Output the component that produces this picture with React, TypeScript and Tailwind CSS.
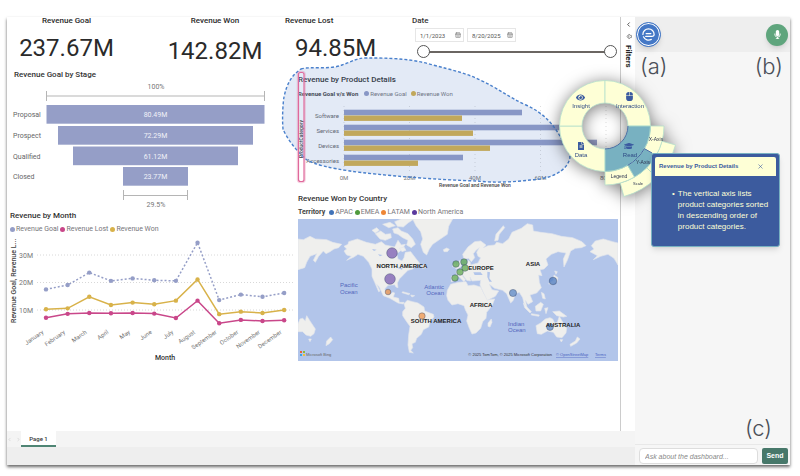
import { useState } from "react";
import { CalendarDays, ChevronLeft, ChevronRight, Volume1, X } from "lucide-react";
import { FaEye, FaFileAlt, FaGraduationCap, FaMicrophone, FaMouse } from "react-icons/fa";

const GOAL = "#959ec7";
const WON = "#d8b24a";
const LOST = "#c9478a";

const funnel = [
    { stage: "Proposal", value: "80.49M", x: 39.5, y: 25, w: 218 },
    { stage: "Prospect", value: "72.29M", x: 51, y: 46, w: 195 },
    { stage: "Qualified", value: "61.12M", x: 66, y: 66.5, w: 165 },
    { stage: "Closed", value: "23.77M", x: 116, y: 87, w: 65 },
];

const products = [
    { name: "Software", goal: 178, won: 118 },
    { name: "Services", goal: 232, won: 129 },
    { name: "Devices", goal: 253, won: 146 },
    { name: "Accessories", goal: 119, won: 74 },
];

const months = [
    "January", "February", "March", "April", "May", "June",
    "July", "August", "September", "October", "November", "December",
];

const goalSeries = [17.5, 19.1, 23.6, 20.6, 21.5, 20.8, 20.6, 34.5, 13.6, 15.6, 14.8, 16.2];
const wonSeries = [10.3, 10.6, 14.8, 11.8, 12.7, 12.1, 13.4, 21.1, 8.5, 9.4, 8.9, 10];
const lostSeries = [7.2, 8.6, 8.9, 8.8, 8.9, 8.7, 7.1, 13.4, 5.2, 6.4, 6, 6.3];

const monthX = (i: number) => 39 + i * 21.65;
const millionY = (v: number) => 103.5 - v * 2.75;

interface LegendItem {
    label: string;
    color: string;
}

function Legend({ title, items, small }: { title?: string; items: LegendItem[]; small?: boolean }) {
    return (
        <ul
            className={`mt-1 flex items-center leading-[9px] text-[#77767a] ${small ? "gap-1 text-[6px]" : "gap-[2px] text-[7px]"
                }`}
        >
            {title && <li className="mr-[2px] font-bold text-[#444]">{title}</li>}
            {items.map((item) => (
                <li key={item.label} className="flex items-center gap-px whitespace-nowrap">
                    <svg viewBox="0 0 6 6" className="size-[5px]">
                        <circle cx="3" cy="3" r="3" fill={item.color} />
                    </svg>
                    {item.label}
                </li>
            ))}
        </ul>
    );
}

function FunnelChart() {
    return (
        <svg viewBox="0 0 291 131" className="block w-full" fontSize="7">
            <g stroke="#b5b5b5" fill="none">
                <path d="M39.5 16H257.5M39.5 11V21M257.5 11V21" />
                <path d="M116.5 115.5H180.5M116.5 110V120M180.5 110V120" />
            </g>
            <text x="149" y="9" textAnchor="middle" fill="#777">100%</text>
            {funnel.map((f) => (
                <g key={f.stage}>
                    <rect x={f.x} y={f.y} width={f.w} height="18.7" fill={GOAL} />
                    <text x="6" y={f.y + 12} fill="#666">{f.stage}</text>
                    <text x="148.5" y={f.y + 12} textAnchor="middle" fill="#f1f2f8">{f.value}</text>
                </g>
            ))}
            <text x="149" y="127" textAnchor="middle" fill="#777">29.5%</text>
        </svg>
    );
}

function Series({ data, color, dashed }: { data: number[]; color: string; dashed?: boolean }) {
    return (
        <g>
            <polyline
                points={data.map((v, i) => `${monthX(i)},${millionY(v)}`).join(" ")}
                fill="none"
                stroke={color}
                strokeWidth="1.5"
                strokeDasharray={dashed ? "2 2" : undefined}
            />
            {data.map((v, i) => (
                <circle key={i} cx={monthX(i)} cy={millionY(v)} r="2.2" fill={color} />
            ))}
        </g>
    );
}

function MonthChart() {
    return (
        <svg viewBox="0 0 291 130" className="block w-full overflow-visible" fontSize="7">
            {[30, 20, 10].map((v) => (
                <g key={v}>
                    <path d={`M30 ${millionY(v)}H286`} stroke="#d8d8d8" strokeDasharray="1 2" />
                    <text x="26" y={millionY(v) + 2.5} textAnchor="end" fill="#777">{v}M</text>
                </g>
            ))}
            <text transform="translate(9 89) rotate(-90)" fontWeight="500" fill="#444">
                Revenue Goal, Revenue L...
            </text>
            <Series data={goalSeries} color={GOAL} dashed />
            <Series data={lostSeries} color={LOST} />
            <Series data={wonSeries} color={WON} />
            {months.map((m, i) => (
                <text
                    key={m}
                    transform={`translate(${monthX(i) - 2} 99) rotate(-35)`}
                    textAnchor="end"
                    fontSize="6"
                    fill="#777"
                >
                    {m}
                </text>
            ))}
            <text x="158" y="126" textAnchor="middle" fontWeight="500" fill="#333">Month</text>
        </svg>
    );
}

function ProductChart() {
    return (
        <svg viewBox="0 0 320 92" className="block w-full overflow-visible" fontSize="6">
            <path d="M46 8V76M111.5 8V76M177 8V76M242.5 8V76M308 8V76" stroke="#ddd" strokeDasharray="1 3" />
            {products.map((p, i) => (
                <g key={p.name}>
                    <rect x="46" y={11.7 + i * 15} width={p.goal} height="5.6" fill={GOAL} />
                    <rect x="46" y={17.5 + i * 15} width={p.won} height="5.4" fill={WON} />
                    <text x="41" y={20 + i * 15} textAnchor="end" fill="#666">{p.name}</text>
                </g>
            ))}
            {["0M", "20M", "40M", "60M", "80M"].map((t, i) => (
                <text key={t} x={46 + i * 65.5} y="82" textAnchor="middle" fill="#777">{t}</text>
            ))}
            <text x="177" y="89" textAnchor="middle" fontSize="5" fontWeight="500" fill="#444">
                Revenue Goal and Revenue Won
            </text>
            <text transform="translate(5 60) rotate(-90)" fontSize="5" fontWeight="500" fill="#222">
                ProductCategory
            </text>
        </svg>
    );
}

const land = [
    // eastern Siberia, wrapped round the left edge
    "M0 60 L16 62 L36 52 L52 60 L86 62 L104 70 L131 76 L122 86 L108 90 L96 98 L84 104 L76 96 L62 112 L52 130 L46 124 L56 104 L36 112 L26 130 L20 146 L0 152Z",
    // North and Central America
    "M138 96 L146 90 L138 82 L150 76 L152 68 L178 60 L205 70 L232 76 L250 68 L262 78 L290 84 L300 64 L310 78 L322 76 L312 92 L296 104 L300 120 L312 126 L318 116 L322 100 L338 98 L350 114 L366 134 L352 142 L344 150 L330 154 L318 166 L304 180 L298 192 L300 206 L294 204 L290 197 L270 199 L260 210 L266 226 L276 228 L284 220 L290 222 L286 234 L302 238 L304 250 L318 250 L316 255 L300 252 L276 238 L256 230 L244 204 L236 196 L246 216 L242 218 L230 190 L222 172 L222 150 L212 130 L196 112 L180 106 L168 114 L146 124 L160 112 L146 108Z",
    // South America
    "M318 254 L328 244 L344 248 L360 252 L378 264 L380 276 L406 286 L408 294 L396 308 L392 324 L376 332 L370 346 L356 358 L352 370 L342 374 L344 386 L338 394 L346 402 L334 400 L330 378 L332 348 L336 322 L326 308 L314 290 L314 278 L322 268Z",
    // Greenland and the Arctic islands
    "M344 0 L464 0 L452 22 L448 46 L424 62 L404 76 L394 90 L386 108 L376 100 L368 76 L374 60 L368 38 L354 20Z",
    "M232 44 L248 36 L262 46 L278 44 L280 56 L262 64 L246 60Z",
    "M222 34 L236 26 L244 34 L232 42Z",
    "M284 30 L300 26 L310 36 L330 44 L344 60 L352 76 L340 86 L326 78 L330 64 L314 56 L300 46 L288 42Z",
    "M254 16 L276 10 L292 20 L272 26Z",
    "M290 8 L310 0 L348 0 L330 12 L316 24 L298 22Z",
    "M304 88 L318 84 L324 94 L312 98Z",
    "M436 92 L446 87 L454 91 L448 98 L438 98Z",
    "M314 218 L336 224 L332 227 L312 221Z M338 228 L350 230 L342 234Z M370 140 L382 136 L384 146 L374 148Z",
    // Africa and Madagascar
    "M458 196 L482 190 L504 188 L510 200 L528 198 L548 204 L558 224 L570 242 L590 240 L582 260 L566 280 L564 298 L554 308 L548 328 L534 342 L522 345 L514 328 L506 306 L510 288 L502 272 L498 260 L480 254 L462 258 L450 244 L446 230 L448 214Z",
    "M570 312 L580 300 L582 310 L576 324 L570 322Z",
    // Eurasia
    "M460 188 L460 172 L478 170 L474 158 L490 150 L500 138 L508 136 L510 124 L516 128 L518 138 L540 132 L548 116 L540 112 L536 100 L544 86 L534 94 L526 104 L530 116 L520 128 L512 118 L498 120 L494 106 L510 84 L530 68 L548 66 L564 78 L556 86 L570 80 L590 78 L596 70 L614 74 L632 60 L642 40 L670 28 L688 14 L704 18 L706 36 L728 40 L762 44 L790 52 L824 56 L852 68 L864 80 L850 86 L832 88 L818 96 L808 124 L798 144 L796 120 L804 102 L780 98 L760 106 L744 120 L750 138 L738 150 L726 152 L732 170 L722 168 L724 190 L730 206 L716 222 L696 228 L704 248 L690 256 L682 244 L688 270 L680 260 L674 236 L664 220 L652 224 L646 244 L638 252 L626 224 L614 214 L590 208 L574 196 L582 212 L602 216 L592 232 L568 244 L554 216 L546 198 L548 184 L522 186 L516 174 L518 186 L506 184 L496 170 L490 166 L502 182 L498 188 L482 172 L474 182Z",
    "M478 134 L486 124 L490 142 L478 150 L472 148Z M466 136 L474 134 L472 144 L464 144Z",
    "M590 66 L594 46 L616 20 L620 26 L604 46 L600 64Z",
    // Japan
    "M768 168 L780 176 L776 190 L760 196 L752 194 L766 184Z M770 156 L778 158 L774 166Z",
    // South-east Asia, Australia and New Zealand
    "M676 252 L700 278 L696 282 L680 266Z M700 284 L724 288 L722 292 L700 288Z",
    "M712 262 L728 250 L736 256 L728 276 L714 276Z M740 268 L750 266 L744 284Z M730 220 L738 224 L742 240 L734 238Z",
    "M764 278 L784 276 L806 292 L796 294 L776 290Z",
    "M714 320 L728 312 L742 300 L756 296 L764 300 L770 312 L778 310 L784 292 L792 306 L806 328 L804 342 L792 356 L776 354 L766 340 L748 336 L730 346 L718 344Z M786 362 L794 362 L790 369Z",
    "M838 354 L846 360 L836 372 L818 382 L816 376 L832 366Z",
    "M0 314 L6 300 L14 298 L22 306 L26 290 L36 306 L52 330 L48 344 L38 352 L24 348 L14 338 L0 338Z M32 360 L40 360 L36 368Z M86 366 L98 354 L104 362 L94 374 L84 380Z",
    // Alaska again on the right edge
    "M876 98 L888 90 L880 80 L892 66 L916 60 L944 68 L960 72 L960 138 L948 118 L930 106 L908 112 L886 122 L898 110Z",
];

const pins = [
    { x: 94, y: 34, r: 5.3, color: "#7a5bb0" },
    { x: 92, y: 60, r: 5.3, color: "#7a5bb0" },
    { x: 90, y: 73, r: 2.8, color: "#f0964a" },
    { x: 124, y: 97, r: 3.2, color: "#f0964a" },
    { x: 158, y: 45, r: 3.3, color: "#5fa84f" },
    { x: 166, y: 43, r: 3.3, color: "#5fa84f" },
    { x: 167, y: 49, r: 3.3, color: "#5fa84f" },
    { x: 162, y: 53, r: 3.3, color: "#5fa84f" },
    { x: 157, y: 59, r: 3.3, color: "#5fa84f" },
    { x: 215, y: 74, r: 3.6, color: "#5a85c4" },
    { x: 255, y: 62, r: 3.8, color: "#4a78be" },
    { x: 252, y: 108, r: 3.4, color: "#5a85c4" },
];

function WorldMap() {
    return (
        <svg viewBox="0 0 320 142" className="mt-[2px] block w-full bg-[#b2c5ea] font-['Liberation_Sans',sans-serif]">
            <g transform="scale(0.33333)" fill="#efefed" stroke="#e3e6ec" strokeWidth="2" strokeLinejoin="round">
                {land.map((d) => (
                    <path key={d} d={d} />
                ))}
                {/* inland waters */}
                <g fill="#b2c5ea" stroke="none">
                    <path d="M568 158 L576 160 L574 178 L582 188 L574 188 L568 174Z" />
                    <path d="M526 160 L548 160 L554 168 L530 168Z" />
                    <path d="M302 144 L314 148 L312 152 L300 148Z M222 90 L236 92 L228 96Z M240 106 L254 108 L246 112Z" />
                </g>
            </g>
            {pins.map((p) => (
                <circle
                    key={`${p.x}-${p.y}`}
                    cx={p.x}
                    cy={p.y}
                    r={p.r}
                    fill={p.color}
                    fillOpacity="0.75"
                    stroke="#3d4a6b"
                    strokeOpacity="0.6"
                    strokeWidth="0.7"
                />
            ))}
            <g fontSize="6" fontWeight="bold" fill="#222" textAnchor="middle">
                <text x="104" y="49">NORTH AMERICA</text>
                <text x="138" y="104">SOUTH AMERICA</text>
                <text x="183" y="51">EUROPE</text>
                <text x="235" y="47">ASIA</text>
                <text x="183" y="88">AFRICA</text>
                <text x="265" y="108">AUSTRALIA</text>
            </g>
            <g fontSize="6" fill="#5267bd">
                <text x="42" y="68">Pacific</text>
                <text x="42" y="75">Ocean</text>
                <text x="146" y="70" textAnchor="end">Atlantic</text>
                <text x="146" y="76" textAnchor="end">Ocean</text>
                <text x="210" y="107">Indian</text>
                <text x="210" y="113">Ocean</text>
            </g>
            <path d="M2 132h2v2h-2z" fill="#e8623a" />
            <path d="M5 132h2v2h-2z" fill="#8bb93c" />
            <path d="M2 135h2v2h-2z" fill="#3fa3e0" />
            <path d="M5 135h2v2h-2z" fill="#f3bb3a" />
            <g fontSize="4">
                <text x="8" y="137" fill="#666">Microsoft Bing</text>
                <text x="254" y="137" textAnchor="end" fill="#333">
                    © 2025 TomTom, © 2025 Microsoft Corporation
                </text>
                <a href="#osm">
                    <text x="258" y="137" fill="#4a5fc0" textDecoration="underline">© OpenStreetMap</text>
                </a>
                <a href="#terms">
                    <text x="297" y="137" fill="#4a5fc0" textDecoration="underline">Terms</text>
                </a>
            </g>
        </svg>
    );
}

// ring sector around 0,0; angles in degrees, clockwise from the x axis
function sector(r0: number, r1: number, from: number, to: number) {
    const point = (r: number, deg: number) => {
        const a = (deg * Math.PI) / 180;
        return `${(r * Math.cos(a)).toFixed(2)} ${(r * Math.sin(a)).toFixed(2)}`;
    };
    return `M${point(r0, from)} L${point(r1, from)} A${r1} ${r1} 0 0 1 ${point(r1, to)} L${point(r0, to)} A${r0} ${r0} 0 0 0 ${point(r0, from)}Z`;
}

function HelpWheel() {
    return (
        <svg
            viewBox="-75 -75 150 150"
            className="absolute top-[34px] right-[110px] w-[150px] font-['Liberation_Sans',sans-serif] drop-shadow-[0_2px_8px_rgba(0,0,0,0.5)]"
        >
            <g fill="#feffd6" stroke="#b5dfcb" strokeWidth="0.8">
                <path d={sector(59, 73, 15, 45)} />
                <path d={sector(59, 73, 45, 75)} />
                <path d={sector(45.5, 59, 0, 30)} />
                <path d={sector(45.5, 59, 60, 90)} />
                <path d={sector(45.5, 59, 30, 60)} fill="#78b1c1" />
                <path d={sector(23, 45.5, 90, 180)} />
                <path d={sector(23, 45.5, 180, 270)} />
                <path d={sector(23, 45.5, 270, 360)} />
                <path d={sector(23, 45.5, 0, 90)} fill="#78b1c1" />
            </g>
            <path
                d="M23 0 A23 23 0 0 1 0 23M39.4 22.7 A45.5 45.5 0 0 1 22.7 39.4M39.4 22.7 L47 27"
                fill="none"
                stroke="#3b5ba0"
                strokeWidth="0.9"
            />
            <g fill="#3b5ba0" color="#3b5ba0">
                <FaEye x="-29" y="-33" size={9} />
                <FaMouse x="20" y="-34" size={9} />
                <FaFileAlt x="-28" y="16" size={8} />
                <FaGraduationCap x="19" y="15" size={10} />
            </g>
            <g fontSize="6" textAnchor="middle" fill="#2f4a85">
                <text x="-24" y="-18">Insight</text>
                <text x="25" y="-18">Interaction</text>
                <text x="-24" y="31">Data</text>
                <text x="25" y="31">Read</text>
            </g>
            <g fontSize="5" textAnchor="middle" fill="#2b3350">
                <text x="51" y="15">X-Axis</text>
                <text x="38" y="38">Y-Axis</text>
                <text x="14" y="52">Legend</text>
                <text x="33" y="59" fontSize="4">Scale</text>
            </g>
        </svg>
    );
}

function ExplainPopup({ onClose }: { onClose: () => void }) {
    return (
        <section className="absolute top-[136px] right-[10px] h-[94px] w-[129px] rounded-[3px] border border-[#78b1c1] bg-[#3c5b9e] p-[3px] font-['Liberation_Sans',sans-serif] shadow-md">
            <header className="flex h-[19px] items-center justify-between rounded-t-[2px] bg-[#feffd6] pr-3 pl-1 text-[#3b5ba0]">
                <h3 className="text-[6px] font-bold whitespace-nowrap">Revenue by Product Details</h3>
                <button aria-label="Close" onClick={onClose}>
                    <X size={7} />
                </button>
            </header>
            <ul className="mt-[12px] pl-[17px] text-[8px] leading-[11px] whitespace-nowrap text-[#feffd6]">
                <li className="flex gap-[3px]">
                    <span aria-hidden="true">•</span>
                    <span>
                        The vertical axis lists
                        <br />
                        product categories sorted
                        <br />
                        in descending order of
                        <br />
                        product categories.
                    </span>
                </li>
            </ul>
        </section>
    );
}

function DateBox({ label, value }: { label: string; value: string }) {
    return (
        <div className="flex h-[14px] w-[49px] items-center border border-[#e6e6e6] pr-[2px] pl-1">
            <input aria-label={label} defaultValue={value} className="w-full min-w-0 text-[6px] text-[#555] outline-none" />
            <CalendarDays size={6} className="shrink-0 text-[#666]" />
        </div>
    );
}

const rangeClass =
    "pointer-events-none absolute inset-0 h-[13px] w-full appearance-none bg-transparent [&::-webkit-slider-thumb]:pointer-events-auto [&::-webkit-slider-thumb]:size-[13px] [&::-webkit-slider-thumb]:appearance-none [&::-webkit-slider-thumb]:rounded-full [&::-webkit-slider-thumb]:border [&::-webkit-slider-thumb]:border-[#555] [&::-webkit-slider-thumb]:bg-white";

function DateSlicer() {
    return (
        <div className="flex-1 pr-[3px]">
            <h2 className="text-[8px] leading-[8px] font-medium text-[#333]">Date</h2>
            <div className="mt-[3px] ml-[3px] flex gap-[3px]">
                <DateBox label="Start date" value="1/1/2023" />
                <DateBox label="End date" value="8/20/2025" />
            </div>
            <div className="relative mt-[3px] ml-[5px] flex h-[13px] items-center">
                <div className="mx-[6px] h-[2px] flex-1 bg-[#6b6662]" />
                <input type="range" aria-label="From" defaultValue={0} className={rangeClass} />
                <input type="range" aria-label="To" defaultValue={100} className={rangeClass} />
            </div>
        </div>
    );
}

function Report() {
    return (
        <div className="min-w-0 flex-1 border-r border-[#ccc] bg-white pb-[67px]">
            <div className="flex h-[53px] text-[#2a2a2a]">
                <div className="flex w-[119px] flex-col items-center">
                    <h2 className="text-[8px] leading-[8px] font-medium">Revenue Goal</h2>
                    <p className="mt-[11px] text-[24px] leading-[24px]">237.67M</p>
                </div>
                <div className="ml-[24px] flex w-[130px] flex-col items-center">
                    <h2 className="text-[8px] leading-[8px] font-medium">Revenue Won</h2>
                    <p className="mt-[14px] text-[24px] leading-[24px]">142.82M</p>
                </div>
                <div className="ml-[5px] w-[127px]">
                    <h2 className="text-[8px] leading-[8px] font-medium">Revenue Lost</h2>
                    <p className="mt-[11px] pl-[10px] text-[24px] leading-[24px]">94.85M</p>
                </div>
                <DateSlicer />
            </div>

            <div className="grid grid-cols-[291fr_322fr]">
                <div>
                    <h2 className="pl-[7px] text-[8px] leading-[10px] font-medium text-[#333]">Revenue Goal by Stage</h2>
                    <FunnelChart />
                    <div className="pl-[3px]">
                        <h2 className="text-[8px] leading-[10px] font-medium text-[#333]">Revenue by Month</h2>
                        <Legend
                            items={[
                                { label: "Revenue Goal", color: GOAL },
                                { label: "Revenue Lost", color: LOST },
                                { label: "Revenue Won", color: WON },
                            ]}
                        />
                    </div>
                    <MonthChart />
                </div>

                <div className="pt-[5px] pr-[2px]">
                    <div className="relative">
                        <h2 className="text-[8px] leading-[10px] font-medium text-[#333]">Revenue by Product Details</h2>
                        <Legend
                            small
                            title="Revenue Goal v/s Won"
                            items={[
                                { label: "Revenue Goal", color: GOAL },
                                { label: "Revenue Won", color: WON },
                            ]}
                        />
                        <ProductChart />
                        {/* Lasso selection with the highlighted axis */}
                        <svg viewBox="0 0 300 135" className="pointer-events-none absolute -top-5 -left-5 w-[300px]">
                            <path
                                d="M23 14 C32 11 52 15 64 10 C76 6 78 3 88 3 C108 3 132 3 155 10 C174 15 188 18 202 25 C220 33 230 42 248 50 C266 58 276 70 283 83 C289 92 294 100 291 106 C287 116 274 124 252 125 C236 127 215 128 200 126 C160 125 100 120 72 116 C52 113 38 110 29 105 C18 96 8 82 5 74 C4 62 5 48 6 42 C9 28 14 20 23 14Z"
                                fill="#4472c4"
                                fillOpacity="0.15"
                                stroke="#4a80cc"
                                strokeWidth="1.4"
                                strokeDasharray="3 2"
                            />
                            <rect
                                x="20.5"
                                y="17.5"
                                width="5.5"
                                height="109"
                                rx="2"
                                fill="#fff"
                                fillOpacity="0.1"
                                stroke="#e0699c"
                                strokeWidth="1.2"
                            />
                            <rect
                                x="19.5"
                                y="16.5"
                                width="7.5"
                                height="111"
                                rx="3"
                                fill="none"
                                stroke="#e0699c"
                                strokeOpacity="0.3"
                                strokeWidth="1.5"
                            />
                        </svg>
                    </div>
                    <h2 className="mt-1 text-[8px] leading-[10px] font-medium text-[#333]">Revenue Won by Country</h2>
                    <Legend
                        title="Territory"
                        items={[
                            { label: "APAC", color: "#4173b8" },
                            { label: "EMEA", color: "#4f9a3d" },
                            { label: "LATAM", color: "#ee8636" },
                            { label: "North America", color: "#5b3a9e" },
                        ]}
                    />
                    <WorldMap />
                </div>
            </div>
        </div>
    );
}

function AssistantPanel() {
    return (
        <aside className="flex w-[155px] shrink-0 flex-col bg-[#f6f6f6]">
            <div className="flex h-[35px] items-center justify-between bg-[#eee] pr-[2px] pl-px">
                <button
                    aria-label="Assistant"
                    className="flex size-[25px] items-center justify-center rounded-full border border-[#4478c6] bg-[#4478c6] shadow-md ring-1 ring-white ring-inset"
                >
                    <svg viewBox="0 0 16 16" className="size-[15px]" fill="none" stroke="#fff" strokeWidth="1.3" strokeLinecap="round">
                        <path d="M2 8 A6 6 0 1 1 14 8 C14 9.8 12.5 10 11.5 10 H5" />
                        <path d="M5.5 7 H10.5" />
                        <path d="M2.6 10.5 A6 6 0 0 0 11 13.2" />
                    </svg>
                </button>
                <button
                    aria-label="Speak"
                    className="flex size-[22px] items-center justify-center rounded-full bg-[#5fa57d] text-white shadow-md"
                >
                    <FaMicrophone size={9} />
                </button>
            </div>
            <div className="flex justify-between pr-[7px] pl-[5px] font-['Inter',sans-serif] text-[22px] leading-[28px] font-light text-[#4a4f58]">
                <span>(a)</span>
                <span>(b)</span>
            </div>
            <div className="mt-auto pr-[18px] pb-[2px] text-right font-['Inter',sans-serif] text-[22px] leading-[28px] font-light text-[#4a4f58]">
                (c)
            </div>
            <form
                className="flex h-[21px] items-center gap-1 border-t border-[#e8e8e8] pt-[2px] pr-[2px] pl-1 font-['Liberation_Sans',sans-serif]"
                onSubmit={(e) => e.preventDefault()}
            >
                <input
                    aria-label="Question"
                    placeholder="Ask about the dashboard..."
                    className="h-[16px] w-full min-w-0 rounded-[4px] border border-[#ddd] bg-white px-[5px] text-[7px] outline-none placeholder:text-[#888] placeholder:italic"
                />
                <button className="h-[16px] w-[26px] shrink-0 rounded-[2px] bg-[#47786a] text-[7px] leading-[16px] font-bold text-white">
                    Send
                </button>
            </form>
        </aside>
    );
}

export default function App() {
    const [popupOpen, setPopupOpen] = useState(true);

    return (
        <main className="bg-white pt-[17px] pr-[10px] pb-[11px] pl-[7px] font-['Roboto','Liberation_Sans',sans-serif]">
            <div className="relative flex shadow-[0_2px_3px_rgba(0,0,0,0.6)]">
                <div className="flex min-w-0 flex-1 flex-col">
                    <div className="flex">
                        <Report />
                        <div className="flex w-[14px] flex-col items-center bg-white pt-1 text-[#444]">
                            <button aria-label="Expand filters">
                                <ChevronLeft size={7} strokeWidth={3} />
                            </button>
                            <Volume1 size={7} className="mt-[5px] rotate-180" />
                            <span className="mt-[5px] text-[8px] leading-[10px] font-bold text-[#222] [writing-mode:vertical-rl]">
                                Filters
                            </span>
                        </div>
                    </div>
                    <nav className="flex h-[16px] bg-[#f4f4f4] text-[#bbb]">
                        <div className="flex w-[14px] items-center justify-between">
                            <ChevronLeft size={5} />
                            <ChevronRight size={5} />
                        </div>
                        <button className="w-[35px] border-b-2 border-[#4f8574] bg-white text-[6px] font-medium text-[#333]">
                            Page 1
                        </button>
                    </nav>
                    <div className="h-[18px] bg-[#eee]" />
                </div>
                <AssistantPanel />
                <HelpWheel />
                {popupOpen && <ExplainPopup onClose={() => setPopupOpen(false)} />}
            </div>
        </main>
    );
}
